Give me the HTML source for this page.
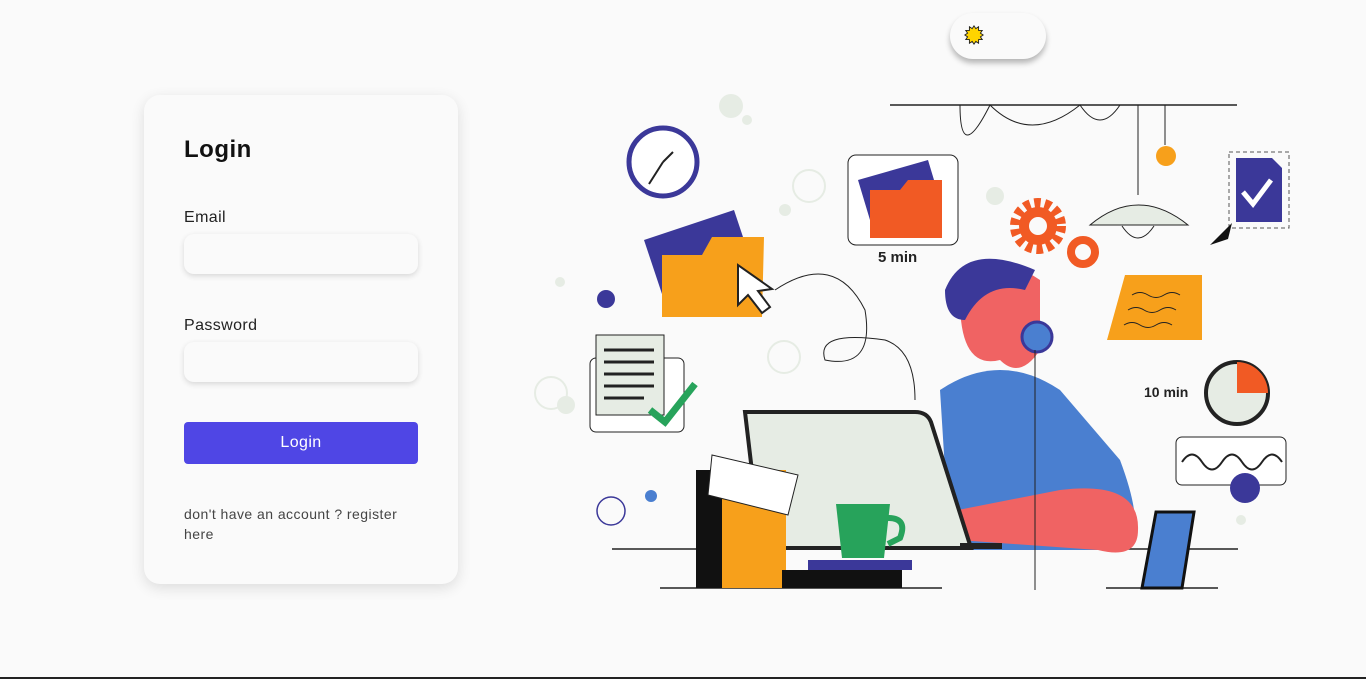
<!DOCTYPE html>
<html><head><meta charset="utf-8"><style>
*{box-sizing:border-box;margin:0;padding:0}
body{width:1366px;height:679px;background:#fafafa;font-family:"Liberation Sans",sans-serif;position:relative;overflow:hidden;border-bottom:2px solid #222}
.card{position:absolute;left:144px;top:95px;width:314px;height:489px;background:#fafafa;border-radius:16px;box-shadow:0 4px 14px rgba(0,0,0,.12)}
h1{position:absolute;left:40px;top:41px;font-size:24px;font-weight:bold;color:#111;letter-spacing:.5px}
.lbl{position:absolute;left:40px;font-size:16px;color:#222;letter-spacing:.4px}
.inp{position:absolute;left:40px;width:234px;height:40px;border-radius:10px;background:#fafafa;box-shadow:0 2px 6px rgba(0,0,0,.14)}
.btn{position:absolute;left:40px;top:327px;width:234px;height:42px;border-radius:4px;background:#4f46e5;color:#fff;font-size:16px;text-align:center;line-height:42px;letter-spacing:.4px}
.ft{position:absolute;left:40px;top:409px;width:232px;font-size:14px;line-height:20px;color:#444;letter-spacing:.45px}
.tog{position:absolute;left:950px;top:13px;width:96px;height:46px;border-radius:23px;background:#fafafa;box-shadow:0 4px 6px rgba(0,0,0,.28)}
</style></head><body>
<div class="tog"><svg width="22" height="22" style="position:absolute;left:13px;top:11px" viewBox="0 0 24 24"><polygon points="12,2 14,5 17,3 17,7 21,7 19,10 22,12 19,14 21,17 17,17 17,21 14,19 12,22 10,19 7,21 7,17 3,17 5,14 2,12 5,10 3,7 7,7 7,3 10,5" fill="#ffd400" stroke="#222" stroke-width="1"/></svg></div>
<div class="card">
<h1>Login</h1>
<div class="lbl" style="top:114px">Email</div>
<div class="inp" style="top:139px"></div>
<div class="lbl" style="top:222px">Password</div>
<div class="inp" style="top:247px"></div>
<div class="btn">Login</div>
<div class="ft">don't have an account ? register here</div>
</div>
<svg width="1366" height="679" style="position:absolute;left:0;top:0" fill="none">
<line x1="890" y1="105" x2="1237" y2="105" stroke="#222" stroke-width="1.5"/>
<path d="M960 105 q0 60 30 0 q40 40 90 0 q20 30 40 0" stroke="#222"/>
<line x1="1138" y1="105" x2="1138" y2="195" stroke="#222"/>
<path d="M1090 225 q48 -40 98 0z" fill="#e6ece4" stroke="#222"/>
<path d="M1122 226 q16 24 32 0" stroke="#222"/>
<line x1="1165" y1="105" x2="1165" y2="145" stroke="#222"/>
<circle cx="1166" cy="156" r="10" fill="#f7a01b"/>
<circle cx="663" cy="162" r="34" stroke="#3b3899" stroke-width="5" fill="#fff"/>
<path d="M663 162 l-14 22 M663 162 l10 -10" stroke="#222" stroke-width="2"/>
<circle cx="731" cy="106" r="12" fill="#e6ece4"/><circle cx="747" cy="120" r="5" fill="#e6ece4"/><circle cx="995" cy="196" r="9" fill="#e6ece4"/>
<circle cx="809" cy="186" r="16" stroke="#e6ece4" stroke-width="2"/><circle cx="785" cy="210" r="6" fill="#e6ece4"/>
<circle cx="606" cy="299" r="9" fill="#3b3899"/><circle cx="651" cy="496" r="6" fill="#4a7fd0"/><circle cx="560" cy="282" r="5" fill="#e6ece4"/>
<circle cx="611" cy="511" r="14" stroke="#3b3899" stroke-width="1.5"/>
<circle cx="566" cy="405" r="9" fill="#e6ece4"/><circle cx="551" cy="393" r="16" stroke="#e6ece4" stroke-width="2"/><circle cx="784" cy="357" r="16" stroke="#e6ece4" stroke-width="2"/><circle cx="1241" cy="520" r="5" fill="#e6ece4"/>
<path d="M644 240 l90 -30 l20 60 l-90 30z" fill="#3b3899"/>
<path d="M662 255 h40 l10 -18 h52 l-2 80 h-100z" fill="#f7a01b"/>
<path d="M738 265 l0 40 l10 -10 l14 18 l8 -6 l-12 -16 l14 -2z" fill="#fff" stroke="#222" stroke-width="2"/>
<path d="M775 290 q60 -40 90 20 q10 60 -40 50 q-10 -30 60 -20 q30 10 30 60" stroke="#222"/>
<rect x="848" y="155" width="110" height="90" rx="8" stroke="#222" fill="#fff"/>
<path d="M858 180 l70 -20 l12 40 l-70 20z" fill="#3b3899"/>
<path d="M870 190 h30 l8 -10 h34 v58 h-72z" fill="#f15a24"/>
<text x="878" y="262" font-family="Liberation Sans" font-weight="bold" font-size="15" fill="#222">5 min</text>
<circle cx="1038" cy="226" r="22" stroke="#f15a24" stroke-width="12" stroke-dasharray="6 4"/><circle cx="1038" cy="226" r="14" stroke="#f15a24" stroke-width="10"/>
<circle cx="1083" cy="252" r="12" stroke="#f15a24" stroke-width="8"/>
<rect x="1229" y="152" width="60" height="76" stroke="#555" stroke-dasharray="4 3"/>
<path d="M1236 158 h36 l10 10 v54 h-46z" fill="#3b3899"/>
<path d="M1243 192 l10 12 l18 -24" stroke="#fff" stroke-width="5"/>
<path d="M1210 245 l22 -22 l-4 16 z" fill="#111"/>
<path d="M1125 275 h77 v65 h-95z" fill="#f7a01b"/>
<path d="M1132 295 q8 -5 16 0 q8 5 16 0 q8 -5 16 0 M1128 310 q8 -5 16 0 q8 5 16 0 q8 -5 16 0 M1124 325 q8 -5 16 0 q8 5 16 0 q8 -5 16 0" stroke="#222"/>
<rect x="590" y="358" width="94" height="74" rx="6" stroke="#222" fill="#fff"/>
<rect x="596" y="335" width="68" height="80" fill="#e6ece4" stroke="#222"/>
<path d="M604 350 h50 M604 362 h50 M604 374 h50 M604 386 h50 M604 398 h40" stroke="#222" stroke-width="3"/>
<path d="M650 410 l15 12 l30 -38" stroke="#27a35b" stroke-width="7"/>
<circle cx="1237" cy="393" r="31" stroke="#222" stroke-width="4" fill="#e6ece4"/>
<path d="M1237 362 a31 31 0 0 1 31 31 h-31z" fill="#f15a24"/>
<text x="1144" y="397" font-family="Liberation Sans" font-weight="bold" font-size="14" fill="#222">10 min</text>
<rect x="1176" y="437" width="110" height="48" rx="6" stroke="#222" fill="#fff"/>
<path d="M1182 462 q10 -15 20 0 q10 15 20 0 q10 -15 20 0 q10 15 20 0 q10 -15 20 0" stroke="#222" stroke-width="2"/>
<circle cx="1245" cy="488" r="15" fill="#3b3899"/>
<line x1="612" y1="549" x2="1238" y2="549" stroke="#222" stroke-width="1.5"/>
<line x1="660" y1="588" x2="942" y2="588" stroke="#222" stroke-width="1.5"/>
<line x1="1106" y1="588" x2="1218" y2="588" stroke="#222" stroke-width="1.5"/>
<path d="M940 390 q60 -40 120 0 l60 70 q30 80 0 90 h-170z" fill="#4a7fd0"/>
<path d="M960 300 q20 -60 80 -20 l0 70 q-20 30 -40 10 q-40 10 -40 -60z" fill="#f06363"/>
<path d="M945 290 q20 -50 90 -20 l-10 20 q-40 -10 -60 30 q-20 0 -20 -30z" fill="#3b3899"/>
<circle cx="1037" cy="337" r="15" fill="#4a7fd0" stroke="#3b3899" stroke-width="3"/>
<path d="M1060 490 q80 -10 78 40 q0 30 -40 20 l-140 -10 v-30z" fill="#f06363"/>
<path d="M745 412 h170 q12 0 16 10 l40 126 h-210z" fill="#e6ece4" stroke="#222" stroke-width="4"/>
<rect x="960" y="543" width="42" height="6" fill="#222"/>
<rect x="696" y="470" width="30" height="118" fill="#111"/>
<rect x="722" y="470" width="64" height="118" fill="#f7a01b"/>
<path d="M712 455 l86 20 l-10 40 l-80 -20z" fill="#fff" stroke="#222"/>
<rect x="808" y="560" width="104" height="10" fill="#3b3899"/><rect x="782" y="570" width="120" height="18" fill="#111"/>
<path d="M836 504 h54 l-6 54 h-42z" fill="#27a35b"/><path d="M888 518 q20 0 12 20 l-12 6" stroke="#27a35b" stroke-width="6"/>
<path d="M1156 512 h38 l-12 76 h-40z" fill="#4a7fd0" stroke="#111" stroke-width="3"/>
<line x1="1035" y1="350" x2="1035" y2="590" stroke="#222"/>
</svg>
</body></html>
